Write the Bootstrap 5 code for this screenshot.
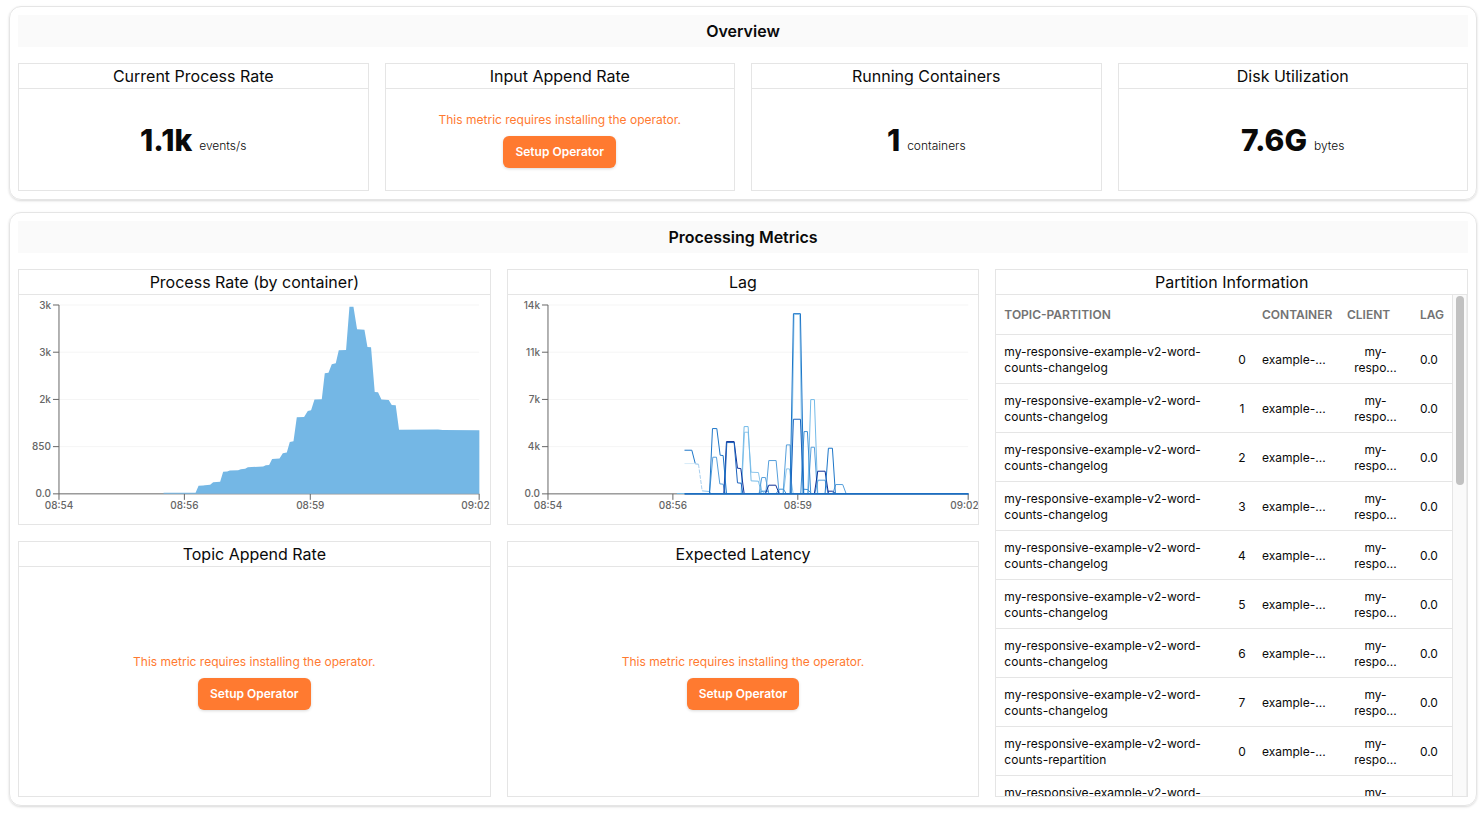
<!DOCTYPE html>
<html lang="en">
<head>
<meta charset="utf-8">
<meta name="viewport" content="width=device-width, initial-scale=1">
<title>Overview</title>
<link href="https://cdn.jsdelivr.net/npm/bootstrap@5.3.0/dist/css/bootstrap.min.css" rel="stylesheet">
<style>
  :root { --line: #e5e5e5; --ink: #0a0a0a; --accent: #ff7a30; }
  body { font-family: Inter, "Liberation Sans", sans-serif; font-size: 12px; line-height: 16px; color: var(--ink); background: #fff; padding: 6px 7px 6px 9px; }
  .board { gap: 12px; }
  .panel { border: 1px solid var(--line); border-radius: 12px; box-shadow: 0 1px 3px rgba(0,0,0,.1), 0 1px 2px rgba(0,0,0,.06); }
  .panel-title { background: #fafafa; font-size: 16px; line-height: 24px; font-weight: 600; padding: 4px; }
  .tile { border: 1px solid var(--line); min-height: 128px; }
  .tile-title { font-size: 16px; line-height: 24px; font-weight: 400; border-bottom: 1px solid var(--line); }
  .tile-body { min-height: 0; }
  .metrics { display: grid; grid-template-columns: repeat(3, minmax(0, 1fr)); grid-auto-rows: 256px; gap: 16px; }
  .tall { grid-row: span 2; }
  .figure-set { gap: 7px; }
  .figure-num { font-size: 30px; line-height: 36px; font-weight: 800; }
  .figure-unit { font-weight: 300; line-height: 24px; }
  .notice { color: var(--accent); }
  .btn-setup { --bs-btn-color: #fff; --bs-btn-bg: var(--accent); --bs-btn-hover-color: #fff; --bs-btn-hover-bg: #f26a1e; --bs-btn-active-color: #fff; --bs-btn-active-bg: #e56016;
    font-size: 12px; line-height: 16px; font-weight: 600; padding: 8px 12px; border: 0; border-radius: 6px; box-shadow: 0 1px 3px rgba(0,0,0,.15); }
  .chart { display: block; width: 100%; height: 100%; }
  .chart text { font-size: 10px; font-weight: 500; fill: #666; }
  .grid-lines { stroke: #f5f5f5; }
  .axis { stroke: #666; fill: none; }
  .scroller { overflow-y: auto; scrollbar-width: none; min-width: 0; }
  .scroller::-webkit-scrollbar { display: none; }
  .scroll-track { flex: 0 0 15px; background: #fafafa; border-left: 1px solid var(--line); border-right: 1px solid #ededed; padding: 1px 2px 2px 3px; }
  .scroll-thumb { height: 38%; background: #c1c1c1; border-radius: 4px; }
  .parts { table-layout: fixed; width: 100%; border-collapse: separate; border-spacing: 0; }
  .parts th { color: #737373; font-weight: 600; height: 40px; padding: 0 8px; }
  .parts td { height: 49px; padding: 9px 8px 7px; }
  .parts th, .parts td { border-bottom: 1px solid var(--line); }
  .col-num { width: 24px; } .col-container { width: 85px; } .col-client { width: 73px; } .col-lag { width: 40px; }
</style>
</head>
<body>
<main class="board d-flex flex-column">
  <section class="panel p-2">
    <h2 class="panel-title text-center mb-3">Overview</h2>
    <div class="row row-cols-4 gx-3">
      <div class="col"><article class="tile d-flex flex-column">
        <h3 class="tile-title text-center m-0">Current Process Rate</h3>
        <div class="tile-body flex-grow-1 d-flex align-items-center justify-content-center">
          <div class="figure-set d-flex align-items-end"><span class="figure-num">1.1k</span><span class="figure-unit">events/s</span></div>
        </div></article></div>
      <div class="col"><article class="tile d-flex flex-column">
        <h3 class="tile-title text-center m-0">Input Append Rate</h3>
        <div class="tile-body flex-grow-1 d-flex flex-column align-items-center justify-content-center gap-2">
          <span class="notice">This metric requires installing the operator.</span>
          <button type="button" class="btn btn-setup">Setup Operator</button>
        </div></article></div>
      <div class="col"><article class="tile d-flex flex-column">
        <h3 class="tile-title text-center m-0">Running Containers</h3>
        <div class="tile-body flex-grow-1 d-flex align-items-center justify-content-center">
          <div class="figure-set d-flex align-items-end"><span class="figure-num">1</span><span class="figure-unit">containers</span></div>
        </div></article></div>
      <div class="col"><article class="tile d-flex flex-column">
        <h3 class="tile-title text-center m-0">Disk Utilization</h3>
        <div class="tile-body flex-grow-1 d-flex align-items-center justify-content-center">
          <div class="figure-set d-flex align-items-end"><span class="figure-num">7.6G</span><span class="figure-unit">bytes</span></div>
        </div></article></div>
    </div>
  </section>

  <section class="panel p-2">
    <h2 class="panel-title text-center mb-3">Processing Metrics</h2>
    <div class="metrics">
      <article class="tile d-flex flex-column">
        <h3 class="tile-title text-center m-0">Process Rate (by container)</h3>
        <div class="tile-body flex-grow-1">
          <svg class="chart" viewBox="0 0 471 229" preserveAspectRatio="xMinYMin meet" role="img" aria-label="Process rate by container">
            <path class="grid-lines" d="M40 10H460.500M40 57.250H460.500M40 104.500H460.500M40 151.750H460.500"/>
            <path class="axis" d="M40 10V199H460.500M34 10h6M34 57.250h6M34 104.500h6M34 151.750h6M34 199h6M40 199v6M165.500 199v6M291.500 199v6M460.500 199v6"/>
            <path fill="#74b7e5" d="M144.700 198L176.700 198 179.700 191 184.300 190.700 186 190.300 191.300 190 194.300 187.300 201.300 187 204.300 177 208.300 176.700 211 175.700 219.300 175.300 222 174.300 226.300 174 229 172.300 244.300 171.700 247 170.300 250.300 170 253.300 164 260.700 163.700 264 158.300 268 157.700 271 147 274.700 146.300 278 122.300 285.300 122 289 116 292.300 115.300 295.700 104.700 303 104.300 306 78.300 309.700 77.700 313 69.300 317 68.300 320 55.300 327.300 55 330.700 11.700 334.700 11.700 338.300 34.300 345.700 34.700 348.700 52 352.300 52.300 356 97 359.300 97.300 362.700 104.700 370 105 373 110 377 110.300 380.300 134.900 419.300 134.700 424 135.200 460.700 135.300V199H144.700Z"/>
            <g text-anchor="end"><text x="32" y="14">3k</text><text x="32" y="61">3k</text><text x="32" y="108">2k</text><text x="32" y="155">850</text><text x="32" y="202">0.0</text><text x="471" y="214">09:02</text></g>
            <g text-anchor="middle"><text x="40" y="214">08:54</text><text x="165.500" y="214">08:56</text><text x="291.500" y="214">08:59</text></g>
          </svg>
        </div></article>

      <article class="tile d-flex flex-column">
        <h3 class="tile-title text-center m-0">Lag</h3>
        <div class="tile-body flex-grow-1">
          <svg class="chart" viewBox="0 0 471 229" preserveAspectRatio="xMinYMin meet" role="img" aria-label="Lag by partition">
            <path class="grid-lines" d="M40 10H460.500M40 57.250H460.500M40 104.500H460.500M40 151.750H460.500"/>
            <path class="axis" d="M40 10V199H460.500M34 10h6M34 57.250h6M34 104.500h6M34 151.750h6M34 199h6M40 199v6M165 199v6M290 199v6M460.500 199v6"/>
            <g transform="translate(162.300 5) scale(.33333)" fill="none" stroke-width="3">
              <path stroke="#d8ebf8" d="M43 491H75"/>
              <path stroke="#8fc3ea" d="M75 492L85 493M96 573L118 575 123 581"/>
              <path stroke="#a9cfee" stroke-dasharray="12 4" d="M85 493L96 573"/>
              <path stroke="#1c75c8" d="M43 451H65L75 490"/>
              <path stroke="#8cc6ec" d="M214 581L223 397H234L243 517 265 518 275 574 285 581M340 581L349 507H358L369 581M363 581L372 43H389L397 581"/>
              <path stroke="#74bbe8" d="M413 581L422 299H433L443 581M213 581L222 380H234L243 543 265 544 274 581"/>
              <path stroke="#559fdb" d="M118 581L128 472H139L149 552 159 553 165 581M267 581L275 533H286L296 581M287 581L296 482H318L327 581M339 581L349 435H360L364 581M414 581L423 442H433L442 581M434 581L444 541H465L474 581M488 581L497 554H518L528 581"/>
              <path stroke="#3c8fd3" d="M392 581L402 395H412L422 581M318 581L328 568H340L348 581M265 581L275 574H296M400 568L413 569 422 579"/>
              <path stroke="#0e2f97" d="M161 581L169 425H192L202 505 212 506 222 581M286 581L296 556H317L327 581M433 581L443 514H465L475 581M474 574H487L496 581"/>
              <path stroke="#1b62bd" d="M163 581L170 428H192L202 549 213 550 218 581M362 581L370 358H391L400 581"/>
              <path stroke="#1c75c8" d="M118 581L127 386H140L150 466 159 467 169 581M360 581L370 41H391L401 581M465 581L475 445H487L496 581"/>
              <path stroke="#74bbe8" d="M20 581H43"/>
              <path stroke="#1b6ec2" stroke-width="5" d="M43 582H896"/>
            </g>
            <g text-anchor="end"><text x="32" y="14">14k</text><text x="32" y="61">11k</text><text x="32" y="108">7k</text><text x="32" y="155">4k</text><text x="32" y="202">0.0</text><text x="471" y="214">09:02</text></g>
            <g text-anchor="middle"><text x="40" y="214">08:54</text><text x="165" y="214">08:56</text><text x="290" y="214">08:59</text></g>
          </svg>
        </div></article>

      <article class="tile tall d-flex flex-column">
        <h3 class="tile-title text-center m-0">Partition Information</h3>
        <div class="tile-body flex-grow-1 d-flex">
          <div class="scroller flex-grow-1">
            <table class="parts">
              <colgroup><col><col class="col-num"><col class="col-container"><col class="col-client"><col class="col-lag"></colgroup>
              <thead><tr><th scope="col" colspan="2">TOPIC-PARTITION</th><th scope="col">CONTAINER</th><th scope="col">CLIENT</th><th scope="col">LAG</th></tr></thead>
              <tbody id="partitions"></tbody>
            </table>
          </div>
          <div class="scroll-track" aria-hidden="true"><div class="scroll-thumb"></div></div>
        </div></article>

      <article class="tile d-flex flex-column">
        <h3 class="tile-title text-center m-0">Topic Append Rate</h3>
        <div class="tile-body flex-grow-1 d-flex flex-column align-items-center justify-content-center gap-2">
          <span class="notice">This metric requires installing the operator.</span>
          <button type="button" class="btn btn-setup">Setup Operator</button>
        </div></article>

      <article class="tile d-flex flex-column">
        <h3 class="tile-title text-center m-0">Expected Latency</h3>
        <div class="tile-body flex-grow-1 d-flex flex-column align-items-center justify-content-center gap-2">
          <span class="notice">This metric requires installing the operator.</span>
          <button type="button" class="btn btn-setup">Setup Operator</button>
        </div></article>
    </div>
  </section>
</main>
<script src="https://cdn.jsdelivr.net/npm/bootstrap@5.3.0/dist/js/bootstrap.bundle.min.js"></script>
<script>
  // One row per topic partition
  const topics = [["changelog", 8], ["repartition", 2]];
  document.getElementById("partitions").innerHTML = topics.map(([kind, count]) =>
    Array.from({ length: count }, (_, n) =>
      `<tr><td>my-responsive-example-v2-word-counts-${kind}</td><td class="text-center">${n}</td><td>example-...</td><td class="text-center">my-respo...</td><td>0.0</td></tr>`
    ).join("")).join("");
</script>
</body>
</html>
